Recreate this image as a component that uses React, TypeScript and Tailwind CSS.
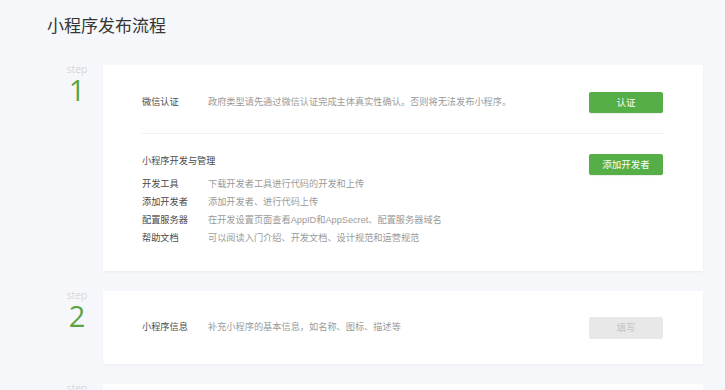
import React from "react";

interface ToolRow {
  label: string;
  desc: string;
}

const tools: ToolRow[] = [
  { label: "开发工具", desc: "下载开发者工具进行代码的开发和上传" },
  { label: "添加开发者", desc: "添加开发者、进行代码上传" },
  { label: "配置服务器", desc: "在开发设置页面查看AppID和AppSecret、配置服务器域名" },
  { label: "帮助文档", desc: "可以阅读入门介绍、开发文档、设计规范和运营规范" },
];

const font = {
  fontFamily: '"Liberation Sans", "Noto Sans CJK SC", sans-serif',
};

const StepLabel: React.FC<{ n: number }> = ({ n }) => (
  <div
    className="w-[56px] shrink-0 flex flex-col items-center pl-[4px] -mt-[2px]"
    style={{ fontFamily: '"Open Sans", "Liberation Sans", sans-serif' }}
  >
    <span className="text-[10.5px] leading-[12px] text-[#c9c9c9] font-light">step</span>
    <span className="text-[29px] leading-[30px] text-[#5aa445] font-normal">{n}</span>
  </div>
);

const GreenButton: React.FC<{ children: React.ReactNode }> = ({ children }) => (
  <button className="w-[74px] h-[21px] rounded-[2px] bg-[#56ae46] text-white text-[9.5px] leading-none shadow-[0_1px_1px_rgba(0,0,0,0.08)]">
    {children}
  </button>
);

const App: React.FC = () => {
  return (
    <div className="w-[725px] h-[390px] overflow-hidden bg-[#f6f7fa] pl-[47px] pt-[16px]" style={font}>
      <h1 className="text-[17px] leading-[22px] text-[#353535] font-normal">小程序发布流程</h1>

      <div className="mt-[27px] flex flex-col gap-[20px]">
        {/* Step 1 */}
        <div className="flex">
          <StepLabel n={1} />
          <div className="w-[600px] bg-white shadow-[0_1px_2px_rgba(0,0,0,0.05)] pl-[39px] pr-[40px] pt-[27px] pb-[23px]">
            <div className="flex items-center justify-between h-[21px]">
              <div className="flex items-center text-[9.2px]">
                <span className="w-[66px] text-[#4a4a4a]">微信认证</span>
                <span className="text-[#9a9a9a]">政府类型请先通过微信认证完成主体真实性确认。否则将无法发布小程序。</span>
              </div>
              <GreenButton>认证</GreenButton>
            </div>

            <div className="mt-[20px] mb-[20px] border-t border-dotted border-[#e2e2e2]" />

            <div className="flex items-start justify-between">
              <span className="text-[9.2px] leading-[14px] text-[#4a4a4a]">小程序开发与管理</span>
              <GreenButton>添加开发者</GreenButton>
            </div>
            <div className="mt-[1px] text-[9.2px]">
              {tools.map((t, i) => (
                <div key={i} className="flex items-center h-[18px]">
                  <span className="w-[66px] text-[#4a4a4a]">{t.label}</span>
                  <span className="text-[#9a9a9a]">{t.desc}</span>
                </div>
              ))}
            </div>
          </div>
        </div>

        {/* Step 2 */}
        <div className="flex">
          <StepLabel n={2} />
          <div className="w-[600px] bg-white shadow-[0_1px_2px_rgba(0,0,0,0.05)] pl-[39px] pr-[40px] pt-[26px] pb-[25px]">
            <div className="flex items-center justify-between h-[22px]">
              <div className="flex items-center text-[9.2px]">
                <span className="w-[66px] text-[#4a4a4a]">小程序信息</span>
                <span className="text-[#9a9a9a]">补充小程序的基本信息，如名称、图标、描述等</span>
              </div>
              <button className="w-[74px] h-[22px] rounded-[2px] bg-[#e8e8e8] text-[#c4c4c4] text-[9.5px] leading-none">
                填写
              </button>
            </div>
          </div>
        </div>

        {/* Step 3 */}
        <div className="flex">
          <StepLabel n={3} />
          <div className="w-[600px] h-[80px] bg-white" />
        </div>
      </div>
    </div>
  );
};

export default App;
